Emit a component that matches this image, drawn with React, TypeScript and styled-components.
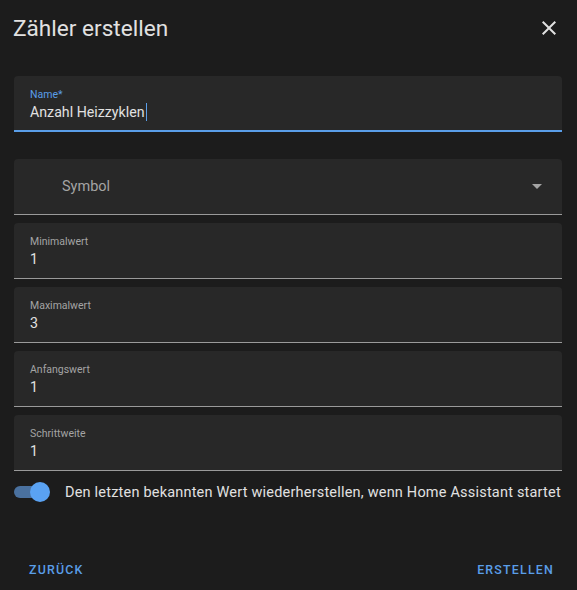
import React, { useState } from 'react';
import styled, { createGlobalStyle } from 'styled-components';

// Types

type FieldProps = {
  label: string
  value: string
}

const GlobalStyle = createGlobalStyle`
  html, body {
    margin: 0;
    padding: 0;
    background-color: #1c1c1c;
  }
  * {
    box-sizing: border-box;
  }
`

const NumberField: React.FC<FieldProps> = ({ label, value }) => (
  <Field>
    <FieldLabel>{label}</FieldLabel>
    <FieldValue>{value}</FieldValue>
  </Field>
)

const App: React.FC = () => {

  const [restore, setRestore] = useState<boolean>(true)

  return (
    <Dialog>
      <GlobalStyle />
      <Header>
        <Title>Zähler erstellen</Title>
        <CloseButton aria-label="Schließen">
          <svg width="24" height="24" viewBox="0 0 24 24">
            <path fill="currentColor" d="M19,6.41L17.59,5L12,10.59L6.41,5L5,6.41L10.59,12L5,17.59L6.41,19L12,13.41L17.59,19L19,17.59L13.41,12L19,6.41Z" />
          </svg>
        </CloseButton>
      </Header>
      <Content>
        <NameField>
          <FieldLabel focused>Name*</FieldLabel>
          <FieldValue>Anzahl Heizzyklen<Caret /></FieldValue>
        </NameField>
        <Fields>
          <SelectField>
            <SelectText>Symbol</SelectText>
            <DropArrow />
          </SelectField>
          <NumberField label="Minimalwert" value="1" />
          <NumberField label="Maximalwert" value="3" />
          <NumberField label="Anfangswert" value="1" />
          <NumberField label="Schrittweite" value="1" />
        </Fields>
        <ToggleRow onClick={() => setRestore(!restore)}>
          <Switch on={restore}>
            <Thumb on={restore} />
          </Switch>
          <ToggleText>Den letzten bekannten Wert wiederherstellen, wenn Home Assistant startet</ToggleText>
        </ToggleRow>
      </Content>
      <Footer>
        <TextButton>Zurück</TextButton>
        <TextButton>Erstellen</TextButton>
      </Footer>
    </Dialog>
  );
}

const Dialog = styled.div`
  width: 577px;
  height: 590px;
  background-color: #1c1c1c;
  font-family: Roboto, "Noto Sans", sans-serif;
  display: flex;
  flex-direction: column;
`

const Header = styled.div`
  display: flex;
  align-items: center;
  justify-content: space-between;
  height: 56px;
  padding: 0 16px 0 13px;
`

const Title = styled.h2`
  margin: 0;
  font-size: 22.6px;
  font-weight: 400;
  color: #e1e1e1;
`

const CloseButton = styled.button`
  background: none;
  border: none;
  padding: 0;
  color: #e1e1e1;
  display: flex;
  cursor: pointer;
`

const Content = styled.div`
  display: flex;
  flex-direction: column;
  padding: 20px 15px 0 14px;
`

const Field = styled.div`
  height: 56px;
  background-color: #282828;
  border-radius: 4px 4px 0 0;
  border-bottom: 1px solid #9a9a9a;
  padding: 13px 16px 0 16px;
  display: flex;
  flex-direction: column;
`

const NameField = styled(Field)`
  border-bottom: 2px solid #5a9ee8;
  margin-bottom: 27px;
`

const Fields = styled.div`
  display: flex;
  flex-direction: column;
  gap: 8px;
`

const FieldLabel = styled.span<{ focused?: boolean }>`
  font-size: 10.5px;
  line-height: 12px;
  color: ${({ focused }) => focused ? '#5a9ee8' : '#a4a4a4'};
`

const FieldValue = styled.span`
  margin-top: 1px;
  font-size: 14.2px;
  line-height: 20px;
  color: #e1e1e1;
  display: flex;
  align-items: center;
`

const Caret = styled.span`
  display: inline-block;
  width: 1px;
  height: 18px;
  margin-left: 1px;
  background-color: #5a9ee8;
`

const SelectField = styled(Field)`
  flex-direction: row;
  align-items: center;
  padding: 0 20px 0 48px;
  justify-content: space-between;
`

const SelectText = styled.span`
  font-size: 14.5px;
  color: #a4a4a4;
`

const DropArrow = styled.span`
  width: 0;
  height: 0;
  border-left: 5px solid transparent;
  border-right: 5px solid transparent;
  border-top: 5px solid #a4a4a4;
`

const ToggleRow = styled.div`
  display: flex;
  align-items: center;
  gap: 19px;
  height: 42px;
  cursor: pointer;
`

const Switch = styled.div<{ on: boolean }>`
  position: relative;
  width: 32px;
  height: 12px;
  border-radius: 6px;
  flex-shrink: 0;
  background-color: ${({ on }) => on ? '#4a719f' : '#6f6f6f'};
`

const Thumb = styled.span<{ on: boolean }>`
  position: absolute;
  top: -4px;
  left: ${({ on }) => on ? '16px' : '-4px'};
  width: 20px;
  height: 20px;
  border-radius: 50%;
  background-color: ${({ on }) => on ? '#5aa2f2' : '#bdbdbd'};
`

const ToggleText = styled.span`
  font-size: 14.5px;
  letter-spacing: 0.2px;
  color: #e1e1e1;
  white-space: nowrap;
`

const Footer = styled.div`
  margin-top: auto;
  display: flex;
  justify-content: space-between;
  align-items: center;
  padding: 0 9px 0 15px;
  height: 42px;
`

const TextButton = styled.button`
  background: none;
  border: none;
  padding: 8px 14px;
  font-family: Roboto, "Noto Sans", sans-serif;
  font-size: 12.4px;
  font-weight: 500;
  letter-spacing: 1.2px;
  text-transform: uppercase;
  color: #5a9ee8;
  cursor: pointer;
`

export default App;
